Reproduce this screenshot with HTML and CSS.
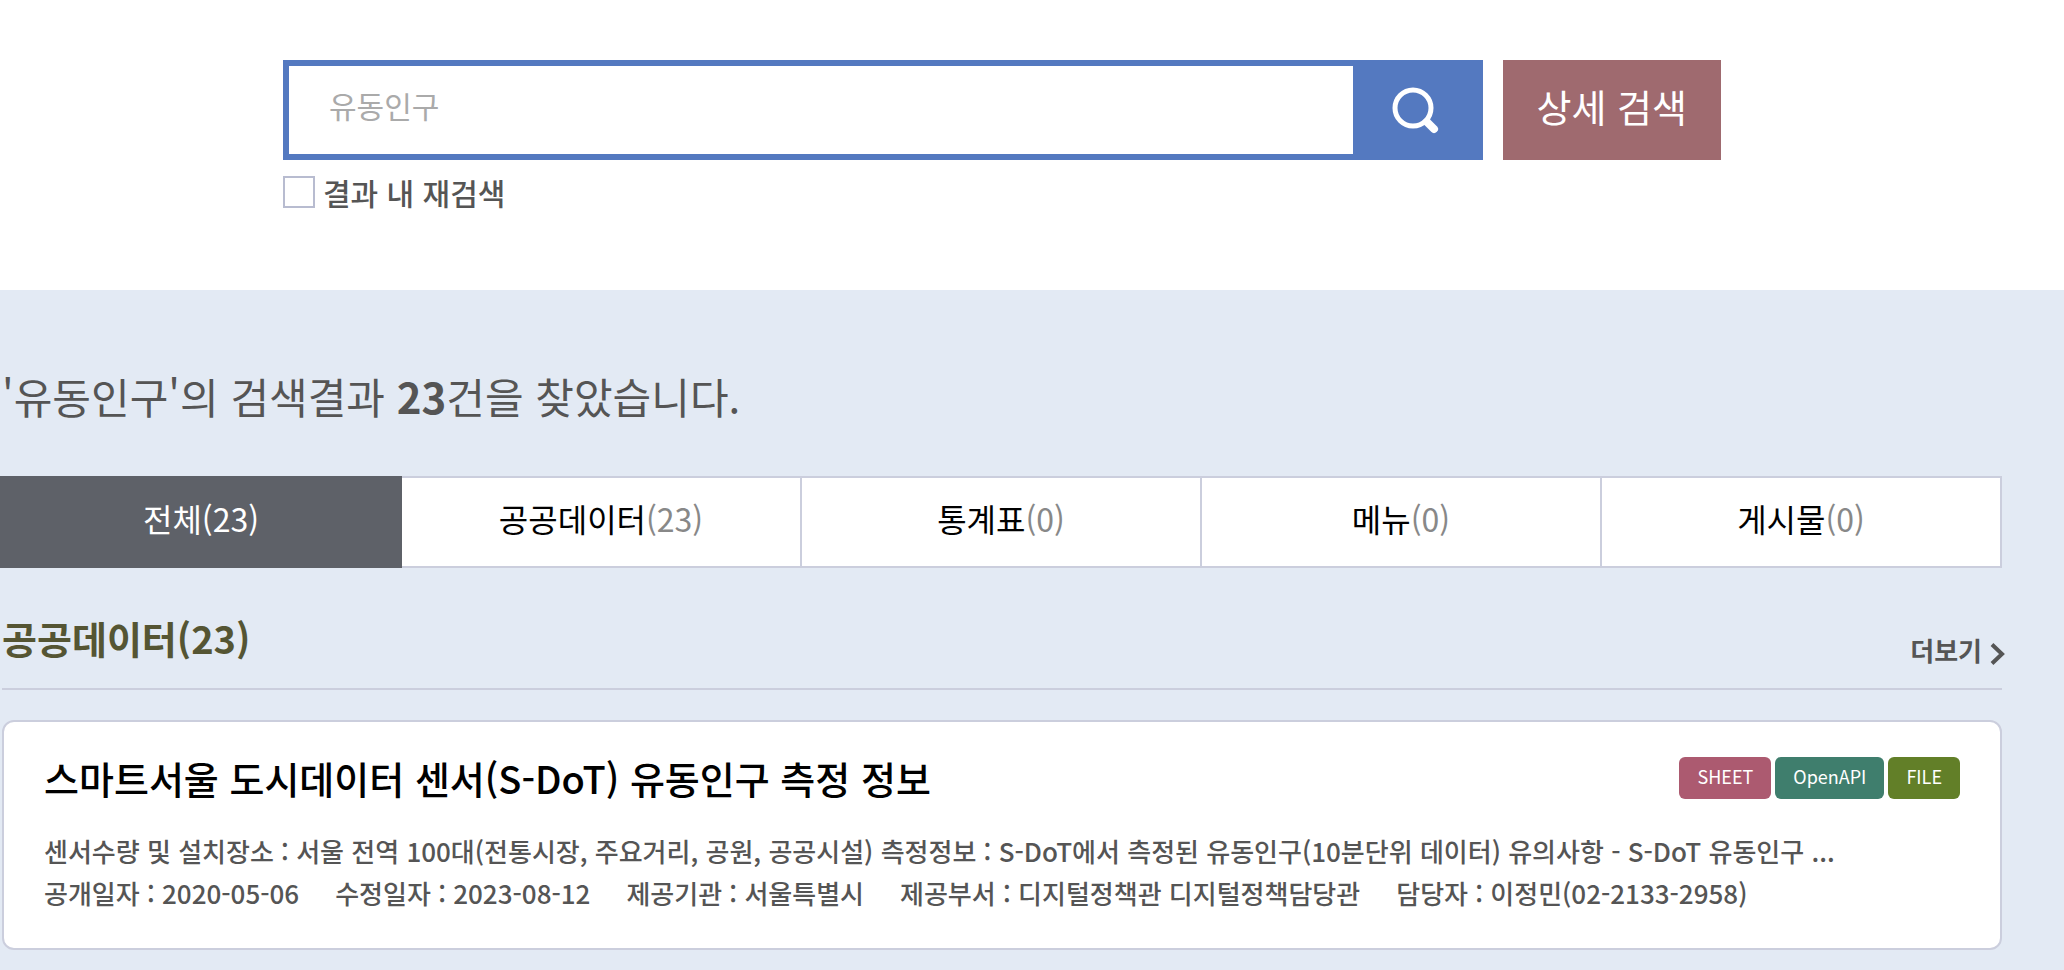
FILE: index.html
```
<!DOCTYPE html>
<html lang="ko">
	<head>
	<meta charset="utf-8">
	<meta name="viewport" content="width=device-width, initial-scale=1">
	<title>통합검색</title>
	<link rel="stylesheet" href="styles.css">
	</head>
	<body>
		<form class="search-area" action="#" method="get">
			<div class="search-inner">
				<div class="search-row">
					<div class="search-box">
						<input type="text" class="search-input" name="query" placeholder="유동인구" aria-label="검색어">
						<button type="submit" class="btn-search" aria-label="검색">
							<svg width="48" height="48" viewBox="0 0 48 48" fill="none" stroke="#fff">
								<circle cx="22" cy="22" r="18" stroke-width="5"/>
								<path d="M36 36L43 43" stroke-width="8" stroke-linecap="round"/>
							</svg>
						</button>
					</div>
					<button type="button" class="btn-detail">상세 검색</button>
				</div>
				<div class="research">
					<input type="checkbox" id="research">
					<label for="research">결과 내 재검색</label>
				</div>
			</div>
		</form>

		<main class="result-area">
			<h1 class="result-title">'유동인구'의 검색결과 <strong>23</strong>건을 찾았습니다.</h1>

			<ul class="tab-list">
				<li class="on"><a href="#">전체<span>(23)</span></a></li>
				<li><a href="#">공공데이터<span>(23)</span></a></li>
				<li><a href="#">통계표<span>(0)</span></a></li>
				<li><a href="#">메뉴<span>(0)</span></a></li>
				<li><a href="#">게시물<span>(0)</span></a></li>
			</ul>

			<section>
				<div class="section-head">
					<h2>공공데이터(23)</h2>
					<a href="#" class="more">더보기
						<svg width="16" height="24" viewBox="0 0 16 24" fill="none" stroke="#555" stroke-width="4">
							<path d="M2 2.500L12 12L2 21.500"/>
						</svg>
					</a>
				</div>
				<article class="card">
					<div class="card-head">
						<h3><a href="#">스마트서울 도시데이터 센서(S-DoT) 유동인구 측정 정보</a></h3>
						<div class="badges">
							<a href="#" class="badge sheet">SHEET</a>
							<a href="#" class="badge api">OpenAPI</a>
							<a href="#" class="badge file">FILE</a>
						</div>
					</div>
					<p class="desc">센서수량 및 설치장소 : 서울 전역 100대(전통시장, 주요거리, 공원, 공공시설) 측정정보 : S-DoT에서 측정된 유동인구(10분단위 데이터) 유의사항 - S-DoT 유동인구 ...</p>
					<ul class="info">
						<li>공개일자 : 2020-05-06</li>
						<li>수정일자 : 2023-08-12</li>
						<li>제공기관 : 서울특별시</li>
						<li>제공부서 : 디지털정책관 디지털정책담당관</li>
						<li>담당자 : 이정민(02-2133-2958)</li>
					</ul>
				</article>
			</section>
		</main>
	</body>
</html>
```

FILE: styles.css
```
* {
	box-sizing: border-box;
}

body {
	margin: 0;
	background: #e3eaf4;
	color: #555;
	font-family: "Noto Sans CJK KR", "Noto Sans", sans-serif;
	font-size: 26px;
}

h1, h2, h3, p, ul {
	margin: 0;
	padding: 0;
}

ul {
	list-style: none;
}

a {
	color: inherit;
	text-decoration: none;
}

button, input {
	margin: 0;
	font-family: inherit;
}

/* search */
.search-area {
	padding: 60px 62px 80px 2px;
	background: #fff;
}

.search-inner {
	max-width: 1438px;
	margin: 0 auto;
}

.search-row {
	display: flex;
	gap: 20px;
}

.search-box {
	display: flex;
	flex: 1;
	min-width: 0;
	height: 100px;
	border: 6px solid #5479c0;
}

.search-input {
	flex: 1;
	min-width: 0;
	padding: 0 40px 10px;
	border: 0;
	background: #fff;
	color: #555;
	font-size: 30px;
}

.search-input::placeholder {
	color: #aaa;
	opacity: 1;
}

.btn-search {
	display: flex;
	align-items: center;
	justify-content: center;
	width: 124px;
	padding: 0;
	border: 0;
	background: #5479c0;
	cursor: pointer;
}

.btn-detail {
	padding: 0 34px 10px;
	border: 0;
	background: #9f6a6f;
	color: #fff;
	font-size: 38px;
	cursor: pointer;
}

.research {
	display: flex;
	align-items: center;
	gap: 8px;
	margin-top: 14px;
	font-size: 30px;
	font-weight: 500;
	line-height: 36px;
}

.research input {
	appearance: none;
	width: 32px;
	height: 32px;
	border: 2px solid #b8bcd0;
	background: #fff;
}

.research input:checked {
	background: #5479c0;
}

/* result */
.result-area {
	padding: 74px 62px 20px 2px;
}

.result-title {
	font-size: 42px;
	font-weight: 400;
	line-height: 64px;
}

.result-title strong {
	font-weight: 700;
}

.tab-list {
	display: grid;
	grid-template-columns: repeat(5, 1fr);
	margin-top: 48px;
}

.tab-list li {
	margin-left: -2px;
	border: 2px solid #cbcedd;
	background: #fff;
	color: #000;
	font-size: 32px;
	line-height: 48px;
	text-align: center;
}

.tab-list a {
	display: block;
	padding: 16px 0 24px;
}

.tab-list span {
	color: #888;
}

.tab-list .on {
	position: relative;
	border-color: #5e6168;
	background: #5e6168;
	color: #fff;
}

.tab-list .on span {
	color: #fff;
}

.section-head {
	display: flex;
	align-items: flex-end;
	justify-content: space-between;
	margin-top: 40px;
	padding-bottom: 16px;
	border-bottom: 2px solid #cbcedd;
}

.section-head h2 {
	padding-bottom: 4px;
	color: #555533;
	font-size: 38px;
	font-weight: 700;
	line-height: 60px;
}

.more {
	display: flex;
	align-items: center;
	gap: 8px;
	margin-right: -4px;
	font-weight: 700;
	line-height: 44px;
}

.more svg {
	margin-top: 8px;
}

.card {
	margin-top: 30px;
	padding: 32px 40px 34px;
	border: 2px solid #cbcedd;
	border-radius: 12px;
	background: #fff;
}

.card-head {
	display: flex;
	align-items: center;
	justify-content: space-between;
	gap: 20px;
}

.card h3 {
	color: #000;
	font-size: 38px;
	font-weight: 500;
	line-height: 48px;
}

.badges {
	display: flex;
	flex-shrink: 0;
	gap: 4px;
}

.badge {
	padding: 4px 18px 8px;
	border-radius: 6px;
	color: #fff;
	font-size: 18px;
	line-height: 30px;
}

.sheet {
	background: #ac5a70;
}

.api {
	background: #3f7e6d;
}

.file {
	background: #627f28;
}

.desc {
	margin-top: 28px;
	font-weight: 500;
	line-height: 42px;
}

.info {
	display: flex;
	flex-wrap: wrap;
	column-gap: 36px;
	font-weight: 500;
	line-height: 42px;
}
```
